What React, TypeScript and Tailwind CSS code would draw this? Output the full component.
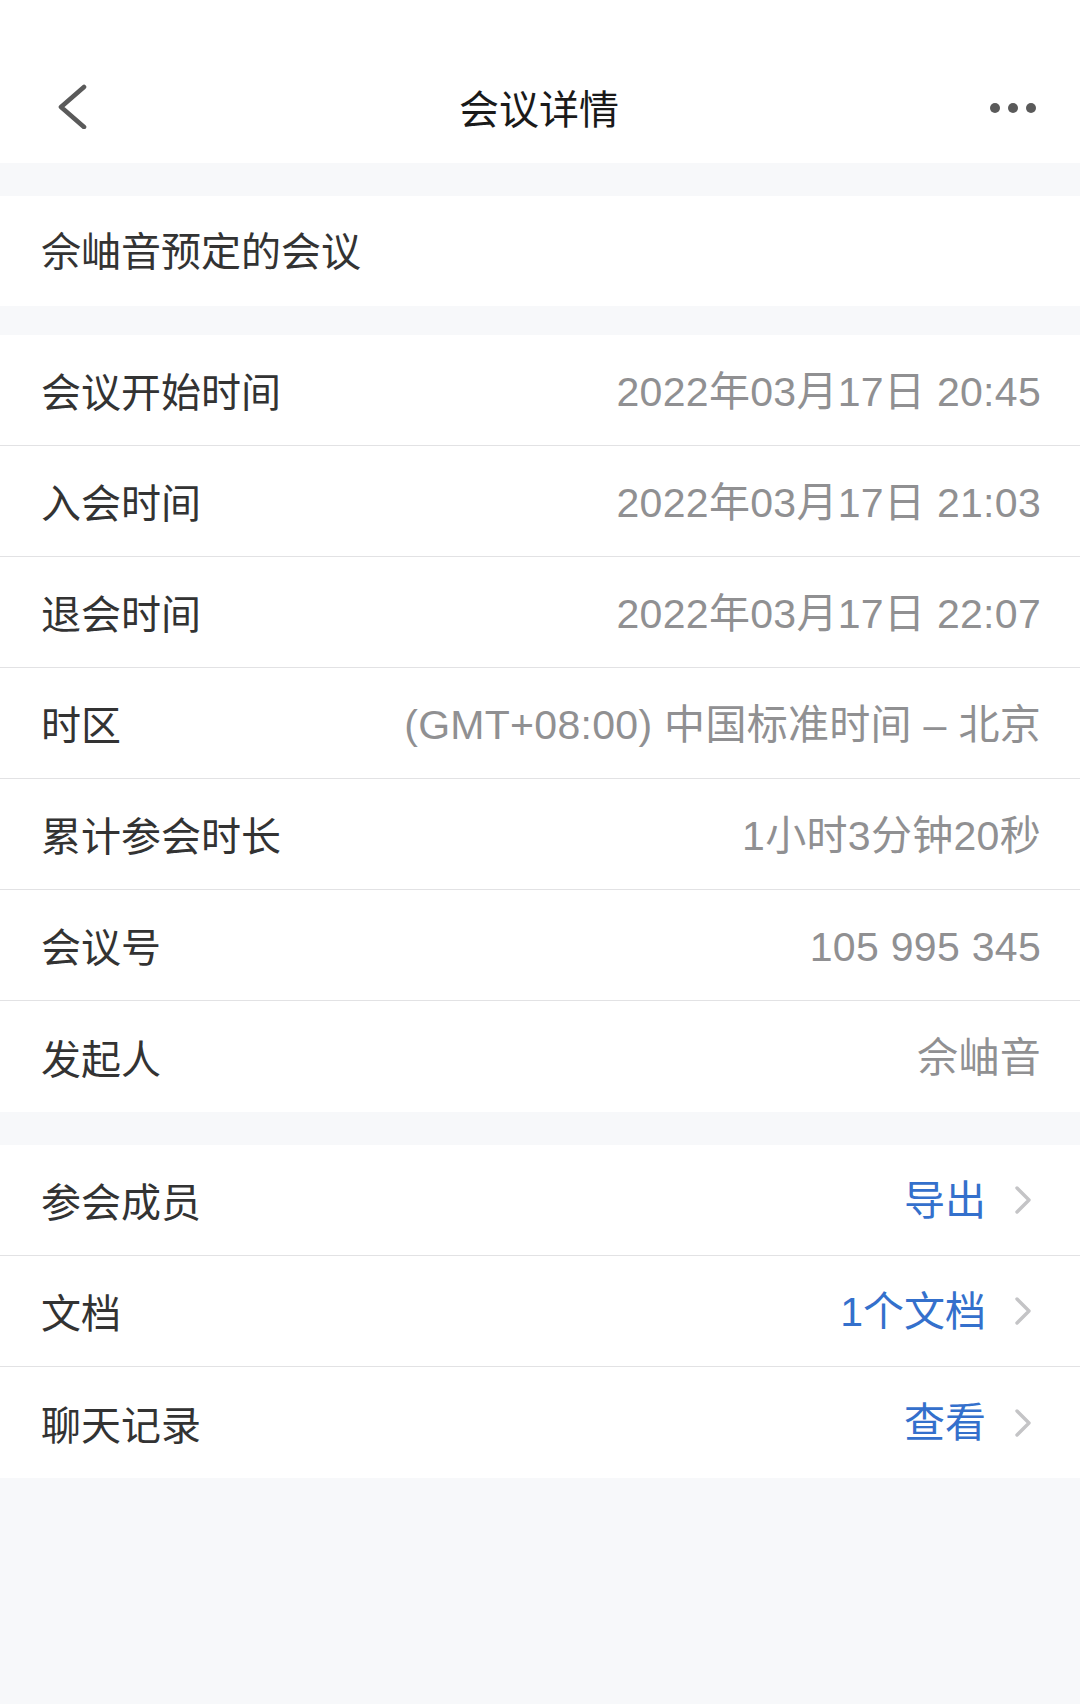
import React from 'react';

interface InfoRow {
  label: string;
  value: string;
}

const infoRows: InfoRow[] = [
  { label: '会议开始时间', value: '2022年03月17日 20:45' },
  { label: '入会时间', value: '2022年03月17日 21:03' },
  { label: '退会时间', value: '2022年03月17日 22:07' },
  { label: '时区', value: '(GMT+08:00) 中国标准时间 – 北京' },
  { label: '累计参会时长', value: '1小时3分钟20秒' },
  { label: '会议号', value: '105 995 345' },
  { label: '发起人', value: '佘岫音' },
];

const linkRows: InfoRow[] = [
  { label: '参会成员', value: '导出' },
  { label: '文档', value: '1个文档' },
  { label: '聊天记录', value: '查看' },
];

const cjk = "font-['Noto_Sans_CJK_SC',sans-serif]";
const mixed = "font-['Liberation_Sans','Noto_Sans_CJK_SC',sans-serif]";

function ChevronRight() {
  return (
    <svg width="18" height="30" viewBox="0 0 18 30" fill="none">
      <polyline points="3,3 15,15 3,27" stroke="#c4c4c6" strokeWidth="3.4" strokeLinecap="round" strokeLinejoin="round" />
    </svg>
  );
}

export default function App() {
  return (
    <div className={`min-h-[1704px] w-full bg-[#f7f8fa] ${cjk}`}>
      {/* header */}
      <div className="h-[163px] bg-white pt-[56px]">
        <div className="flex h-[100px] items-center justify-between pl-[56px] pr-[44px]">
          <svg width="32" height="46" viewBox="0 0 32 46" fill="none">
            <polyline points="28,4 5,24 28,44" stroke="#5a5a5a" strokeWidth="4.6" strokeLinecap="round" strokeLinejoin="round" />
          </svg>
          <div className="pt-[2px] text-[40px] leading-none text-[#1a1a1a]">会议详情</div>
          <div className="flex items-center gap-[8px] pt-[4px]">
            <span className="h-[10px] w-[10px] rounded-full bg-[#5a5a5a]" />
            <span className="h-[10px] w-[10px] rounded-full bg-[#5a5a5a]" />
            <span className="h-[10px] w-[10px] rounded-full bg-[#5a5a5a]" />
          </div>
        </div>
      </div>

      <div className="h-[33px]" />

      <div className="flex h-[110px] items-center bg-white px-[41px] pb-[4px]">
        <span className="text-[40px] leading-none text-[#333333]">佘岫音预定的会议</span>
      </div>

      <div className="h-[29px]" />

      <div className="bg-white">
        {infoRows.map((row, i) => (
          <div
            key={row.label}
            className={`flex h-[111px] items-center justify-between pl-[41px] pr-[39px] ${i < infoRows.length - 1 ? 'border-b border-[#e2e2e4]' : ''}`}
          >
            <span className="text-[40px] leading-none text-[#333333]">{row.label}</span>
            <span className={`${mixed} pt-[4px] text-[41px] leading-none tracking-[0.3px] text-[#909092]`}>{row.value}</span>
          </div>
        ))}
      </div>

      <div className="h-[33px]" />

      <div className="bg-white">
        {linkRows.map((row, i) => (
          <div
            key={row.label}
            className={`flex h-[111px] items-center justify-between pl-[41px] pr-[48px] ${i < linkRows.length - 1 ? 'border-b border-[#e2e2e4]' : ''}`}
          >
            <span className="text-[40px] leading-none text-[#333333]">{row.label}</span>
            <div className="flex items-center gap-[28px]">
              <span className={`${mixed} pt-[2px] text-[41px] leading-none text-[#3470cc]`}>{row.value}</span>
              <ChevronRight />
            </div>
          </div>
        ))}
      </div>
    </div>
  );
}
